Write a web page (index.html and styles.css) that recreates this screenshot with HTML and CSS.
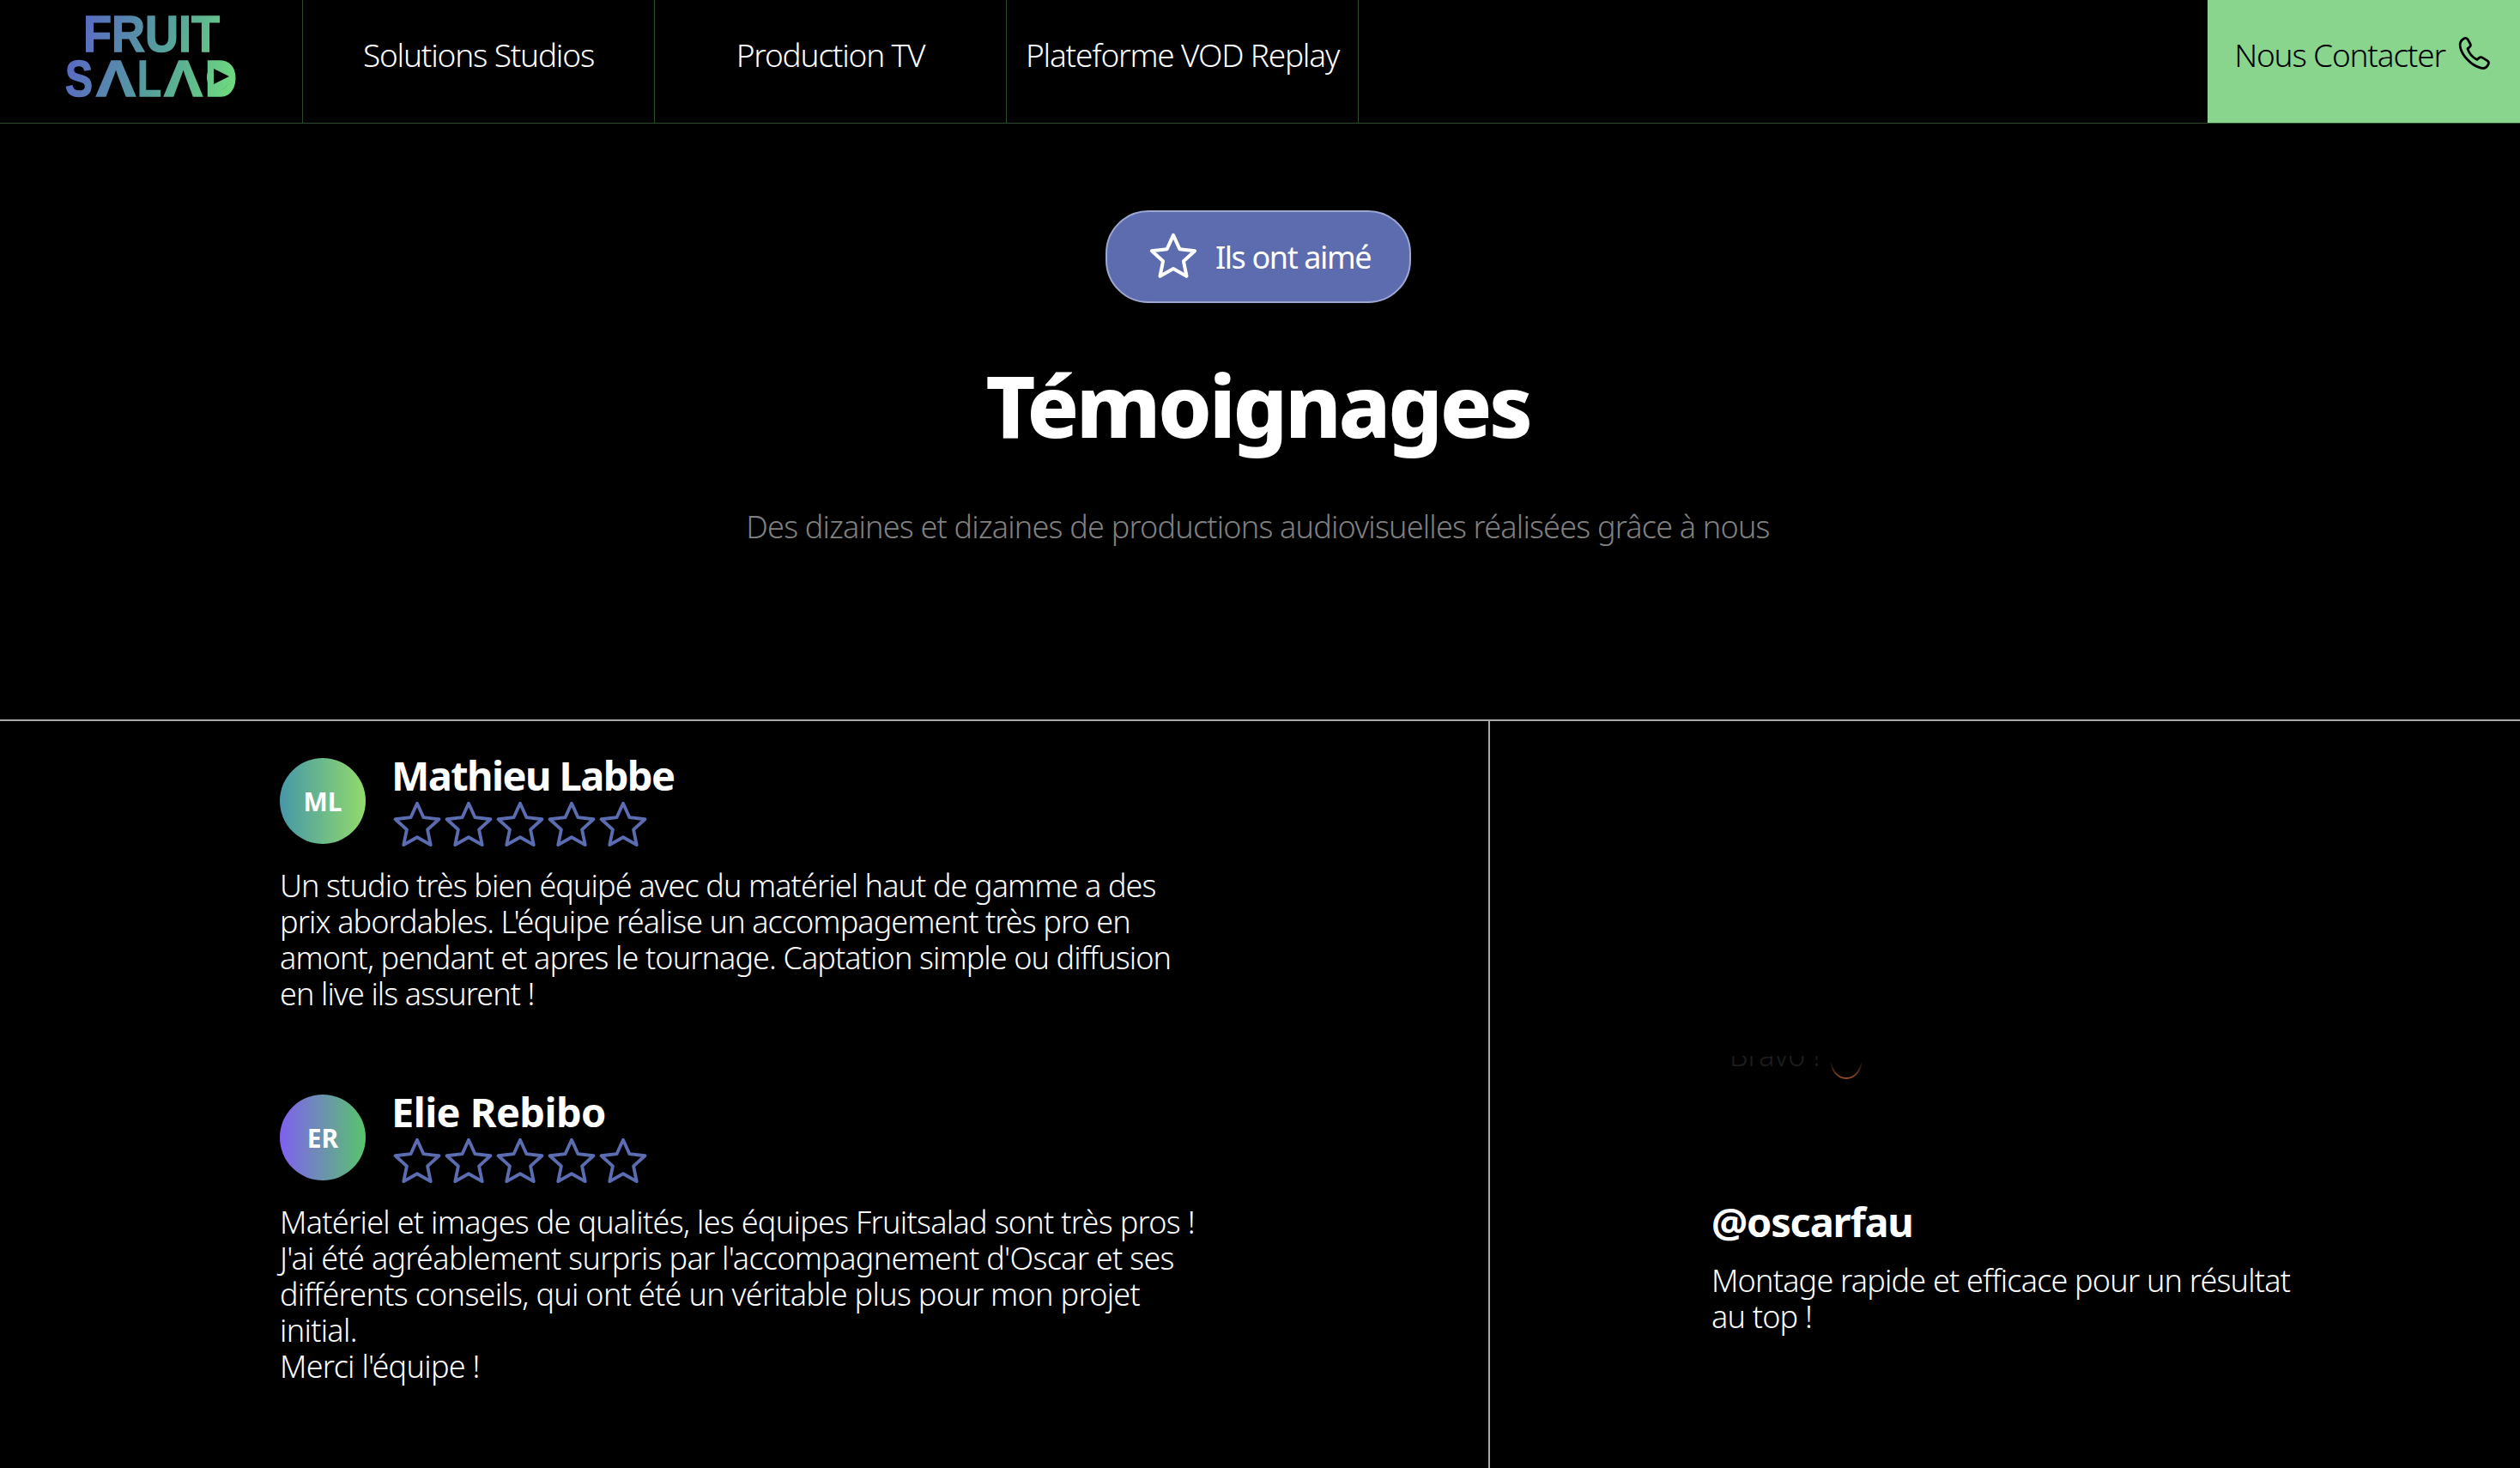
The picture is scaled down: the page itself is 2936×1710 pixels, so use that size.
FILE: index.html
```html
<!DOCTYPE html>
<html lang="fr">
<head>
    <meta charset="UTF-8">
    <meta name="viewport" content="width=device-width, initial-scale=1.0">
    <title>Témoignages - Fruit Salad</title>
    <link rel="stylesheet" href="styles.css">
</head>
<body>
    <svg class="defs" width="0" height="0">
        <defs>
            <linearGradient id="logo-grad" gradientUnits="userSpaceOnUse" x1="78" y1="40" x2="276" y2="100">
                <stop offset="0" stop-color="#5a63c9"/>
                <stop offset="0.55" stop-color="#55a29a"/>
                <stop offset="1" stop-color="#6fdc7c"/>
            </linearGradient>
            <linearGradient id="arc-grad" x1="0" y1="0" x2="0" y2="1">
                <stop offset="0" stop-color="#8a4420" stop-opacity="0"/>
                <stop offset="1" stop-color="#8f4a22"/>
            </linearGradient>
            <path id="star" d="M26 3.500l6.600 14.600 15.900 1.800-11.800 10.800 3.200 15.700L26 38.500l-13.900 7.900 3.200-15.700L3.500 19.900l15.900-1.800z"/>
        </defs>
    </svg>

    <header class="topbar">
        <a class="logo-cell" href="#">
            <svg class="logo" width="352" height="143" viewBox="0 0 352 143">
                <text class="logo-text" x="97" y="60" textLength="159" lengthAdjust="spacingAndGlyphs">FRUIT</text>
                <text class="logo-text" x="76" y="112" textLength="32" lengthAdjust="spacingAndGlyphs">S</text>
                <text class="logo-text" x="112" y="112" textLength="46" lengthAdjust="spacingAndGlyphs">Λ</text>
                <text class="logo-text" x="160" y="112" textLength="28" lengthAdjust="spacingAndGlyphs">L</text>
                <text class="logo-text" x="191" y="112" textLength="45" lengthAdjust="spacingAndGlyphs">Λ</text>
                <text class="logo-text" x="239" y="112" textLength="37" lengthAdjust="spacingAndGlyphs">D</text>
                <ellipse cx="254" cy="90" rx="13" ry="16" fill="url(#logo-grad)"/>
                <path d="M249 80l18 9-18 9z" fill="#000"/>
            </svg>
        </a>
        <nav class="nav">
            <a class="nav-item" href="#">Solutions Studios</a>
            <a class="nav-item" href="#">Production TV</a>
            <a class="nav-item" href="#">Plateforme VOD Replay</a>
        </nav>
        <a class="contact" href="#">Nous Contacter
            <svg width="44" height="44" viewBox="0 0 24 24" fill="none" stroke="#000" stroke-width="1.5" stroke-linejoin="round">
                <path d="M5.200 2.200c1-.6 2-.3 2.600.7l1.400 2.400c.5.9.3 1.800-.5 2.400l-1.100.8c.8 2.600 3.100 5.600 6 7l1.200-1c.7-.6 1.600-.6 2.400-.1l2.900 1.800c.9.6 1.100 1.600.6 2.500-.9 1.700-2.700 2.700-4.700 2.100C9.600 19.200 3.900 12.600 2.900 7.300 2.500 5.200 3.500 3.200 5.200 2.200z"/>
            </svg>
        </a>
    </header>

    <section class="intro">
        <span class="pill">
            <svg width="58" height="58" viewBox="0 0 52 52" fill="none" stroke="#fff" stroke-width="3.600" stroke-linejoin="round"><use href="#star"/></svg>
            Ils ont aimé
        </span>
        <h1>Témoignages</h1>
        <p class="subtitle">Des dizaines et dizaines de productions audiovisuelles réalisées grâce à nous</p>
    </section>

    <main class="reviews">
        <div class="reviews-left">
            <article class="review">
                <div class="review-head">
                    <div class="avatar avatar-ml">ML</div>
                    <div>
                        <h2>Mathieu Labbe</h2>
                        <div class="stars">
                            <svg width="60" height="52" viewBox="2 2 48 46"><use href="#star"/></svg>
                            <svg width="60" height="52" viewBox="2 2 48 46"><use href="#star"/></svg>
                            <svg width="60" height="52" viewBox="2 2 48 46"><use href="#star"/></svg>
                            <svg width="60" height="52" viewBox="2 2 48 46"><use href="#star"/></svg>
                            <svg width="60" height="52" viewBox="2 2 48 46"><use href="#star"/></svg>
                        </div>
                    </div>
                </div>
                <p>Un studio très bien équipé avec du matériel haut de gamme a des prix abordables. L'équipe réalise un accompagement très pro en amont, pendant et apres le tournage. Captation simple ou diffusion en live ils assurent !</p>
            </article>
            <article class="review review-loose">
                <div class="review-head">
                    <div class="avatar avatar-er">ER</div>
                    <div>
                        <h2>Elie Rebibo</h2>
                        <div class="stars">
                            <svg width="60" height="52" viewBox="2 2 48 46"><use href="#star"/></svg>
                            <svg width="60" height="52" viewBox="2 2 48 46"><use href="#star"/></svg>
                            <svg width="60" height="52" viewBox="2 2 48 46"><use href="#star"/></svg>
                            <svg width="60" height="52" viewBox="2 2 48 46"><use href="#star"/></svg>
                            <svg width="60" height="52" viewBox="2 2 48 46"><use href="#star"/></svg>
                        </div>
                    </div>
                </div>
                <p>Matériel et images de qualités, les équipes Fruitsalad sont très pros !<br>J'ai été agréablement surpris par l'accompagnement d'Oscar et ses différents conseils, qui ont été un véritable plus pour mon projet initial.<br>Merci l'équipe !</p>
            </article>
        </div>
        <div class="reviews-right">
            <div class="video-end">
                <div class="video-clip"><span>Bravo !</span></div>
                <svg width="40" height="28" viewBox="0 0 40 28" fill="none" stroke="url(#arc-grad)" stroke-width="2"><path d="M2 6c1 11 8 20 18 20s17-9 18-20"/></svg>
            </div>
            <h2>@oscarfau</h2>
            <p>Montage rapide et efficace pour un résultat au top !</p>
        </div>
    </main>
</body>
</html>
```

FILE: styles.css
```css
body {
    margin: 0;
    background: #000;
    color: #fff;
    font-family: "Noto Sans", sans-serif;
    font-weight: 300;
    height: 1710px;
    overflow: hidden;
}
a {
    color: inherit;
    text-decoration: none;
}
.defs {
    position: absolute;
}
.topbar {
    display: flex;
    height: 143px;
    border-bottom: 1px solid #2d4a2d;
}
.logo-cell {
    width: 352px;
    border-right: 1px solid #2d4a2d;
}
.logo {
    display: block;
}
.logo-text {
    font-family: "Liberation Sans", sans-serif;
    font-size: 60px;
    font-weight: 700;
    fill: url(#logo-grad);
    stroke: url(#logo-grad);
    stroke-width: 1.5;
}
.nav {
    display: flex;
}
.nav-item {
    width: 409px;
    height: 126px;
    border-right: 1px solid #2d4a2d;
    padding-bottom: 17px;
    display: flex;
    align-items: center;
    justify-content: center;
    font-size: 37px;
    letter-spacing: -1.2px;
}
.contact {
    margin-left: auto;
    width: 364px;
    padding-bottom: 17px;
    box-sizing: border-box;
    background: #8ad58d;
    color: #000;
    display: flex;
    align-items: center;
    justify-content: center;
    gap: 12px;
    font-size: 37px;
    letter-spacing: -1.2px;
}
.intro {
    display: flex;
    flex-direction: column;
    align-items: center;
    height: 694px;
    padding-right: 5px;
}
.pill {
    margin-top: 101px;
    width: 356px;
    height: 108px;
    box-sizing: border-box;
    padding-left: 4px;
    background: #5c6cae;
    border: 2px solid #9da8d2;
    border-radius: 50px;
    display: flex;
    align-items: center;
    justify-content: center;
    gap: 20px;
    font-size: 36px;
    letter-spacing: -1.4px;
    font-weight: 400;
}
h1 {
    margin: 53px 0 0;
    font-size: 100px;
    line-height: 130px;
    letter-spacing: -3.3px;
    font-weight: 800;
}
.subtitle {
    margin: 54px 0 0;
    font-size: 36px;
    line-height: 48px;
    letter-spacing: -0.8px;
    color: #808080;
}
.reviews {
    display: flex;
    border-top: 2px solid #a8a8a8;
    height: 872px;
}
.reviews-left {
    width: 1736px;
    border-right: 2px solid #a8a8a8;
    padding: 43px 0 0 326px;
    box-sizing: border-box;
}
.review {
    width: 1075px;
    margin-bottom: 96px;
}
.review-head {
    display: flex;
    gap: 30px;
}
.avatar {
    width: 100px;
    height: 100px;
    border-radius: 50%;
    display: flex;
    align-items: center;
    justify-content: center;
    font-size: 30px;
    font-weight: 700;
    flex: none;
}
.avatar-ml {
    background: linear-gradient(90deg, #4698a8, #92da6c);
}
.avatar-er {
    background: linear-gradient(90deg, #8060f0, #58c46c);
}
h2 {
    margin: 0;
    font-size: 47px;
    line-height: 58px;
    letter-spacing: -1.6px;
    font-weight: 700;
}
.review-head h2 {
    margin-top: -9px;
    margin-bottom: 2px;
}
.stars {
    display: flex;
}
.stars svg {
    fill: none;
    stroke: #5b6cb0;
    stroke-width: 3.400;
    stroke-linejoin: round;
    display: block;
}
.review p {
    margin: 25px 0 0;
    font-size: 36px;
    line-height: 42px;
    letter-spacing: -0.9px;
}
.review-loose h2 {
    letter-spacing: -0.6px;
}
.review-loose p {
    letter-spacing: -0.7px;
}
.reviews-right {
    padding: 0 0 0 258px;
    width: 940px;
    box-sizing: border-box;
}
.reviews-right h2 {
    margin-top: 136px;
    letter-spacing: -1.2px;
}
.video-end {
    margin: 390px 0 0 21px;
    height: 28px;
    display: flex;
    gap: 10px;
}
.video-clip {
    height: 12px;
    overflow: hidden;
    color: #1e1e1e;
    font-size: 34px;
    line-height: 36px;
}
.video-clip span {
    display: block;
    margin-top: -19px;
}
.reviews-right p {
    margin: 19px 0 0;
    width: 700px;
    font-size: 36px;
    line-height: 42px;
    letter-spacing: -0.8px;
}
```
